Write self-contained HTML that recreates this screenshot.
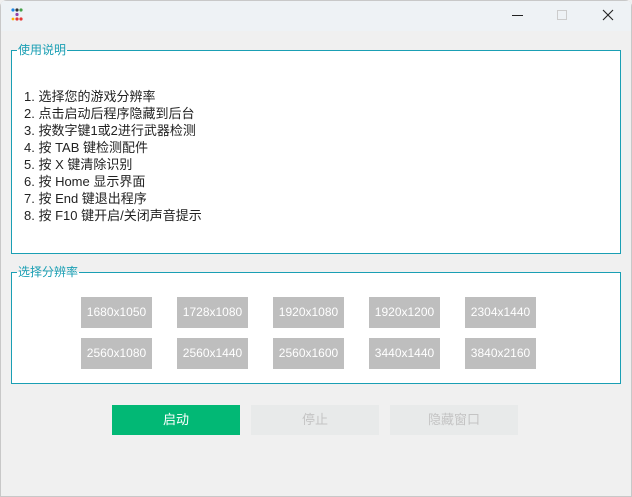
<!DOCTYPE html>
<html><head><meta charset="utf-8"><style>
*{margin:0;padding:0;box-sizing:border-box}
body{width:632px;height:497px;overflow:hidden;background:#f0f0f0;font-family:"Liberation Sans","Noto Sans CJK SC",sans-serif;position:relative}
.win{position:absolute;left:0;top:0;width:632px;height:497px;box-shadow:inset 0 0 0 1px #c8c8c8;border-radius:7px 7px 0 0;background:#f0f0f0;overflow:hidden}
.title{position:absolute;left:1px;top:1px;width:630px;height:30px;background:#eef2f5}
.grp{position:absolute;left:11px;width:610px;border:1px solid #1a9fb4;background:#fff}
.lg{position:absolute;top:-9px;left:5px;color:#1a9fb4;font-size:12px;line-height:16px;padding:0 1px;background:linear-gradient(#f0f0f0 50%,#fff 50%)}
.txt{position:absolute;left:12px;top:37px;font-size:13px;line-height:17px;color:#222}
.rb{position:absolute;width:71px;height:31px;background:#bebebe;color:#fff;font-size:12px;line-height:31px;text-align:center}
.bb{position:absolute;top:405px;width:128px;height:30px;line-height:30px;text-align:center;font-size:13px}
</style></head><body><div class="win">
<div class="title">
<svg style="position:absolute;left:8px;top:6px" width="16" height="16">
<circle cx="4" cy="3" r="1.6" fill="#1e88e5"/><circle cx="8" cy="3" r="1.6" fill="#333"/><circle cx="12" cy="3" r="1.6" fill="#43a047"/>
<circle cx="8" cy="7.5" r="1.6" fill="#8e44ad"/><circle cx="8" cy="12" r="1.6" fill="#e53935"/><circle cx="12" cy="12" r="1.6" fill="#e53935"/><circle cx="4" cy="12" r="1.4" fill="#ffb300"/>
</svg>
<div style="position:absolute;left:511px;top:14px;width:11px;height:1px;background:#222"></div>
<div style="position:absolute;left:556px;top:9px;width:10px;height:10px;border:1px solid #ccc"></div>
<svg style="position:absolute;left:601px;top:8px" width="12" height="12"><path d="M1 1L11 11M11 1L1 11" stroke="#222" stroke-width="1.1"/></svg>
</div>
<div class="grp" style="top:50px;height:204px">
<div class="lg">使用说明</div>
<div class="txt">1. 选择您的游戏分辨率<br>2. 点击启动后程序隐藏到后台<br>3. 按数字键1或2进行武器检测<br>4. 按 TAB 键检测配件<br>5. 按 X 键清除识别<br>6. 按 Home 显示界面<br>7. 按 End 键退出程序<br>8. 按 F10 键开启/关闭声音提示</div>
</div>
<div class="grp" style="top:272px;height:112px">
<div class="lg">选择分辨率</div>
</div>
<div class="rb" style="left:81px;top:297px">1680x1050</div>
<div class="rb" style="left:177px;top:297px">1728x1080</div>
<div class="rb" style="left:273px;top:297px">1920x1080</div>
<div class="rb" style="left:369px;top:297px">1920x1200</div>
<div class="rb" style="left:465px;top:297px">2304x1440</div>
<div class="rb" style="left:81px;top:338px">2560x1080</div>
<div class="rb" style="left:177px;top:338px">2560x1440</div>
<div class="rb" style="left:273px;top:338px">2560x1600</div>
<div class="rb" style="left:369px;top:338px">3440x1440</div>
<div class="rb" style="left:465px;top:338px">3840x2160</div>
<div class="bb" style="left:112px;background:#02b875;color:#fff">启动</div>
<div class="bb" style="left:251px;background:#e8eaea;color:#c4c4c4">停止</div>
<div class="bb" style="left:390px;background:#e8eaea;color:#c4c4c4">隐藏窗口</div>
</div></body></html>
